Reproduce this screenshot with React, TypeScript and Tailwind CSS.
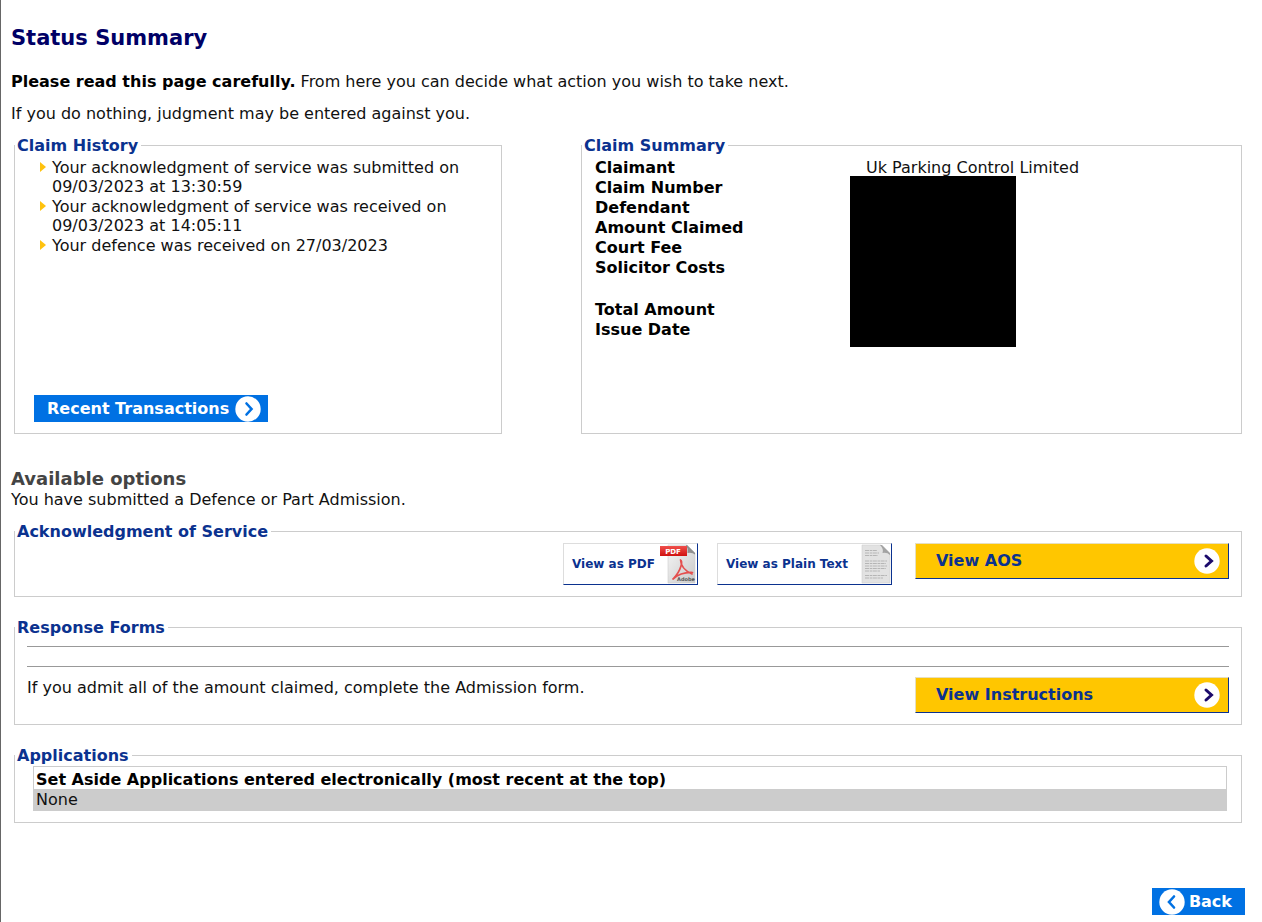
import React from "react";

interface PanelProps {
  title: string;
  children: React.ReactNode;
}

const historyItems = [
  "Your acknowledgment of service was submitted on 09/03/2023 at 13:30:59",
  "Your acknowledgment of service was received on 09/03/2023 at 14:05:11",
  "Your defence was received on 27/03/2023",
];

// An empty label is a spacer row
const summaryRows = [
  { label: "Claimant", value: "Uk Parking Control Limited" },
  { label: "Claim Number", value: "" },
  { label: "Defendant", value: "" },
  { label: "Amount Claimed", value: "" },
  { label: "Court Fee", value: "" },
  { label: "Solicitor Costs", value: "" },
  { label: "", value: "" },
  { label: "Total Amount", value: "" },
  { label: "Issue Date", value: "" },
];

const Panel: React.FC<PanelProps> = ({ title, children }) => (
  <fieldset className="min-w-0 border border-[#cccccc]">
    <legend className="h-5 pt-px pr-[3px] pl-[2px] font-bold text-[#0b328f]">{title}</legend>
    {children}
  </fieldset>
);

const CircleArrow: React.FC<{ color: string; bold?: boolean; left?: boolean }> = ({ color, bold, left }) => (
  <svg width="26" height="26" viewBox="0 0 26 26" className="shrink-0" aria-hidden="true">
    <circle cx="13" cy="13" r="12.7" fill="#fff" />
    <path
      d={left ? "M15 7.5 L10 13 L15 18.5" : bold ? "M12 8 L17.5 13 L12 18" : "M11.5 7.5 L16.5 13 L11.5 18.5"}
      fill="none"
      stroke={color}
      strokeWidth={bold ? 3 : 2.6}
      strokeLinecap="round"
      strokeLinejoin="miter"
    />
  </svg>
);

const YellowButton: React.FC<{ label: string }> = ({ label }) => (
  <button
    type="button"
    className="flex h-9 w-[314px] shrink-0 items-center justify-between border border-t-[#e6dfc0] border-r-[#0b328f] border-b-[#0b328f] border-l-[#e6dfc0] bg-[#ffc600] pr-2 pl-5 font-bold text-[#0b328f]"
  >
    {label}
    <CircleArrow color="#1b0a6b" bold />
  </button>
);

const PdfIcon = () => (
  <svg width="37" height="40" viewBox="0 0 37 40" className="shrink-0" aria-hidden="true">
    <defs>
      <linearGradient id="pdfPage" x1="0" y1="0" x2="1" y2="1">
        <stop offset="0" stopColor="#f6f6f6" />
        <stop offset="1" stopColor="#c9c9c9" />
      </linearGradient>
      <linearGradient id="pdfRed" x1="0" y1="0" x2="0" y2="1">
        <stop offset="0" stopColor="#f0504c" />
        <stop offset="1" stopColor="#d0110f" />
      </linearGradient>
    </defs>
    <path d="M8 1 H27 L35 9 V39 H8 Z" fill="url(#pdfPage)" stroke="#cfcfcf" strokeWidth="0.6" />
    <path d="M26 1 Q28.5 5 27.5 9 Q32 8 35 10.5 V9 L27 1 Z" fill="#8f8f8f" />
    <path
      d="M20.5 16 Q22.5 17 21 22 Q19 29 13 35 M20.5 16 Q21 25 32 30 M13 35 Q21 28 32.5 28.5"
      fill="none"
      stroke="#e4504f"
      strokeWidth="1.7"
      strokeLinecap="round"
    />
    <rect x="0" y="2" width="27" height="10" fill="url(#pdfRed)" />
    <text x="13" y="10" textAnchor="middle" fontSize="7" fontWeight="bold" fill="#fff">
      PDF
    </text>
    <text x="26" y="37" textAnchor="middle" fontSize="5" fontWeight="bold" fill="#555">
      Adobe
    </text>
  </svg>
);

const TextIcon = () => (
  <svg width="30" height="40" viewBox="0 0 30 40" className="shrink-0" aria-hidden="true">
    <path d="M1 1 H20 L29 10 V39 H1 Z" fill="#e2e2e2" stroke="#d2d2d2" strokeWidth="0.6" />
    <path d="M19 1 Q23 5 21.5 9 Q26 8 29 11 L29 9 L21 1 Z" fill="#a3a3a3" />
    <path
      d="M4 6.5 H16 M4 9 H18 M4 11.5 H17 M4 17 H26 M4 19.5 H25 M4 22 H26 M4 24.5 H25 M4 27 H19 M4 31.5 H26 M4 34 H22"
      stroke="#b5b5b5"
      strokeWidth="1.1"
      strokeDasharray="4 0.7 2.5 0.6"
    />
  </svg>
);

const ViewButton: React.FC<{ label: string; icon: React.ReactNode; className: string }> = ({
  label,
  icon,
  className,
}) => (
  <button
    type="button"
    className={`flex h-[42px] shrink-0 items-center justify-between border border-t-[#dddddd] border-r-[#0b328f] border-b-[#0b328f] border-l-[#dddddd] bg-white pl-2 text-[12px] font-bold text-[#0b328f] ${className}`}
  >
    {label}
    {icon}
  </button>
);

export default function App() {
  return (
    <main className="min-h-screen border-l border-[#666666] bg-white pt-6 pr-[17px] pb-[7px] pl-[10px] font-['Verdana','DejaVu_Sans',sans-serif] text-[16px] leading-[20px] text-[#111111]">
      <h1 className="mb-5 text-[21px] leading-[28px] font-bold text-[#000066]">Status Summary</h1>
      <p className="mb-3">
        <strong className="text-black">Please read this page carefully.</strong> From here you can decide what action
        you wish to take next.
      </p>
      <p className="mb-[11px]">If you do nothing, judgment may be entered against you.</p>

      <div className="mx-[3px] mb-[34px] grid grid-cols-[488fr_661fr] gap-[79px]">
        <Panel title="Claim History">
          <div className="flex min-h-[278px] flex-col items-start pt-[3px] pr-6 pb-[11px] pl-[19px]">
            <ul className="flex flex-col gap-px pl-[6px] leading-[19px]">
              {historyItems.map((item) => (
                <li key={item} className="flex gap-[6px]">
                  <svg width="6" height="10" viewBox="0 0 6 10" className="mt-1 shrink-0" aria-hidden="true">
                    <path d="M0 0 L6 5 L0 10 Z" fill="#ffc20e" />
                  </svg>
                  <span>{item}</span>
                </li>
              ))}
            </ul>
            <button
              type="button"
              className="mt-auto flex h-[27px] items-center gap-[6px] bg-[#0071e3] pr-[7px] pl-[13px] font-bold text-white"
            >
              Recent Transactions
              <CircleArrow color="#0071e3" />
            </button>
          </div>
        </Panel>

        <Panel title="Claim Summary">
          <div className="relative mx-[13px] mt-[3px]">
            <table className="w-full text-left">
              <tbody>
                {summaryRows.map((row, i) =>
                  row.label ? (
                    <tr key={i}>
                      <th scope="row" className="w-[271px] font-bold text-black">
                        {row.label}
                      </th>
                      <td>{row.value}</td>
                    </tr>
                  ) : (
                    <tr key={i} className="h-[22px]">
                      <td colSpan={2} />
                    </tr>
                  )
                )}
              </tbody>
            </table>
            {/* Private details are blacked out */}
            <div className="absolute top-[18px] left-[255px] h-[171px] w-[166px] bg-black" />
          </div>
        </Panel>
      </div>

      <h2 className="text-[18px] leading-[22px] font-bold text-[#444444]">Available options</h2>
      <p className="mb-[11px]">You have submitted a Defence or Part Admission.</p>

      <div className="mx-[3px] flex flex-col gap-5">
        <Panel title="Acknowledgment of Service">
          <div className="flex items-start justify-end px-3 pt-[2px] pb-[11px]">
            <div className="mr-[23px] flex gap-[19px]">
              <ViewButton label="View as PDF" icon={<PdfIcon />} className="w-[135px]" />
              <ViewButton label="View as Plain Text" icon={<TextIcon />} className="w-[175px]" />
            </div>
            <YellowButton label="View AOS" />
          </div>
        </Panel>

        <Panel title="Response Forms">
          <div className="px-3 pt-[9px] pb-[11px]">
            <hr className="mb-[19px] border-[#999999]" />
            <hr className="mb-[10px] border-[#999999]" />
            <div className="flex items-start justify-between">
              <p className="pt-px">If you admit all of the amount claimed, complete the Admission form.</p>
              <YellowButton label="View Instructions" />
            </div>
          </div>
        </Panel>

        <Panel title="Applications">
          <div className="pt-px pr-[14px] pb-[11px] pl-[18px]">
            <table className="w-full border border-[#cccccc] text-left">
              <thead>
                <tr>
                  <th className="px-[2px] pt-[3px] leading-[19px] font-bold text-black">
                    Set Aside Applications entered electronically (most recent at the top)
                  </th>
                </tr>
              </thead>
              <tbody>
                <tr className="bg-[#cccccc]">
                  <td className="px-[2px] pt-px">None</td>
                </tr>
              </tbody>
            </table>
          </div>
        </Panel>
      </div>

      <div className="mt-[65px] flex justify-end">
        <button
          type="button"
          className="flex h-[27px] items-center gap-1 bg-[#0071e3] pr-[13px] pl-[7px] font-bold text-white"
        >
          <CircleArrow color="#0071e3" left />
          Back
        </button>
      </div>
    </main>
  );
}
